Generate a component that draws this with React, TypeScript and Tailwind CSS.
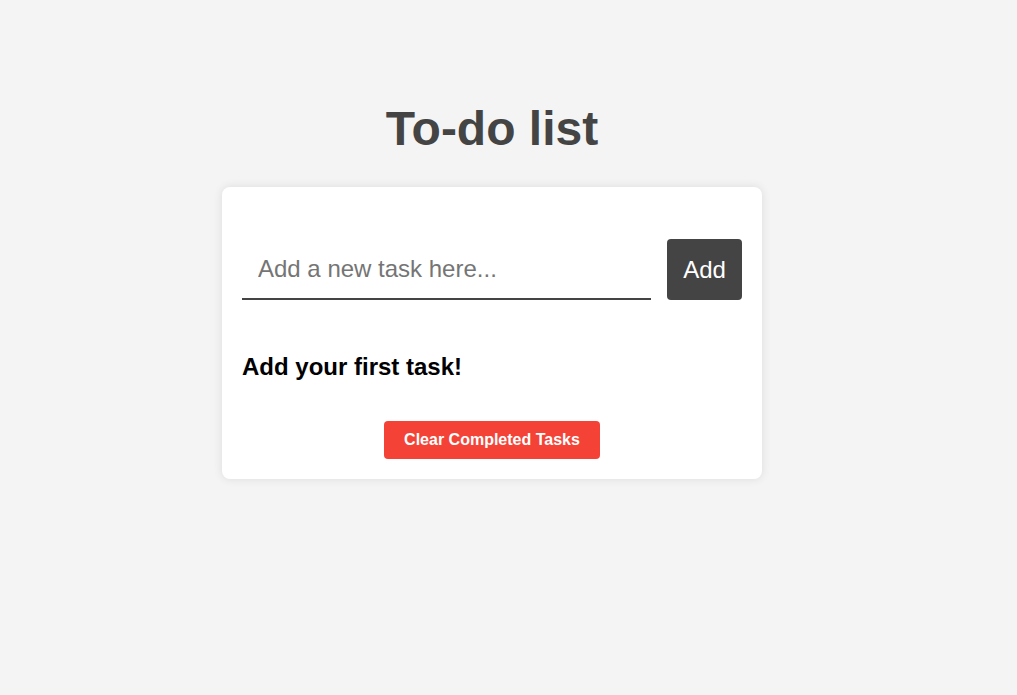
import { useState } from "react"

export default function App() {
  const [task, setTask] = useState("")

  return (
    <div className="min-h-[695px] w-full bg-[#f4f4f4] font-['Liberation_Sans',Arial,sans-serif]">
      <div className="ml-[222px] w-[540px] pt-[102px]">
        <h1 className="text-center text-[48px] font-bold leading-[54px] text-[#444444]">To-do list</h1>

        <div className="mt-[31px] rounded-lg bg-white px-5 pt-[52px] pb-[20px] shadow-[0_0_10px_rgba(0,0,0,0.1)]">
          {/* Input row */}
          <div className="flex h-[61px] items-stretch gap-4">
            <input
              value={task}
              onChange={(e) => setTask(e.target.value)}
              placeholder="Add a new task here..."
              className="min-w-0 flex-1 border-b-2 border-[#444444] bg-transparent px-4 text-[24px] text-[#333] outline-none placeholder:text-[#757575]"
            />
            <button className="w-[75px] rounded bg-[#444444] text-[24px] text-white">Add</button>
          </div>

          <p className="mt-[53px] text-[24px] font-bold leading-[27px] text-black">Add your first task!</p>

          <div className="mt-[41px] flex justify-center">
            <button className="h-[38px] rounded bg-[#f44336] px-5 text-[16px] font-bold text-white">
              Clear Completed Tasks
            </button>
          </div>
        </div>
      </div>
    </div>
  )
}
